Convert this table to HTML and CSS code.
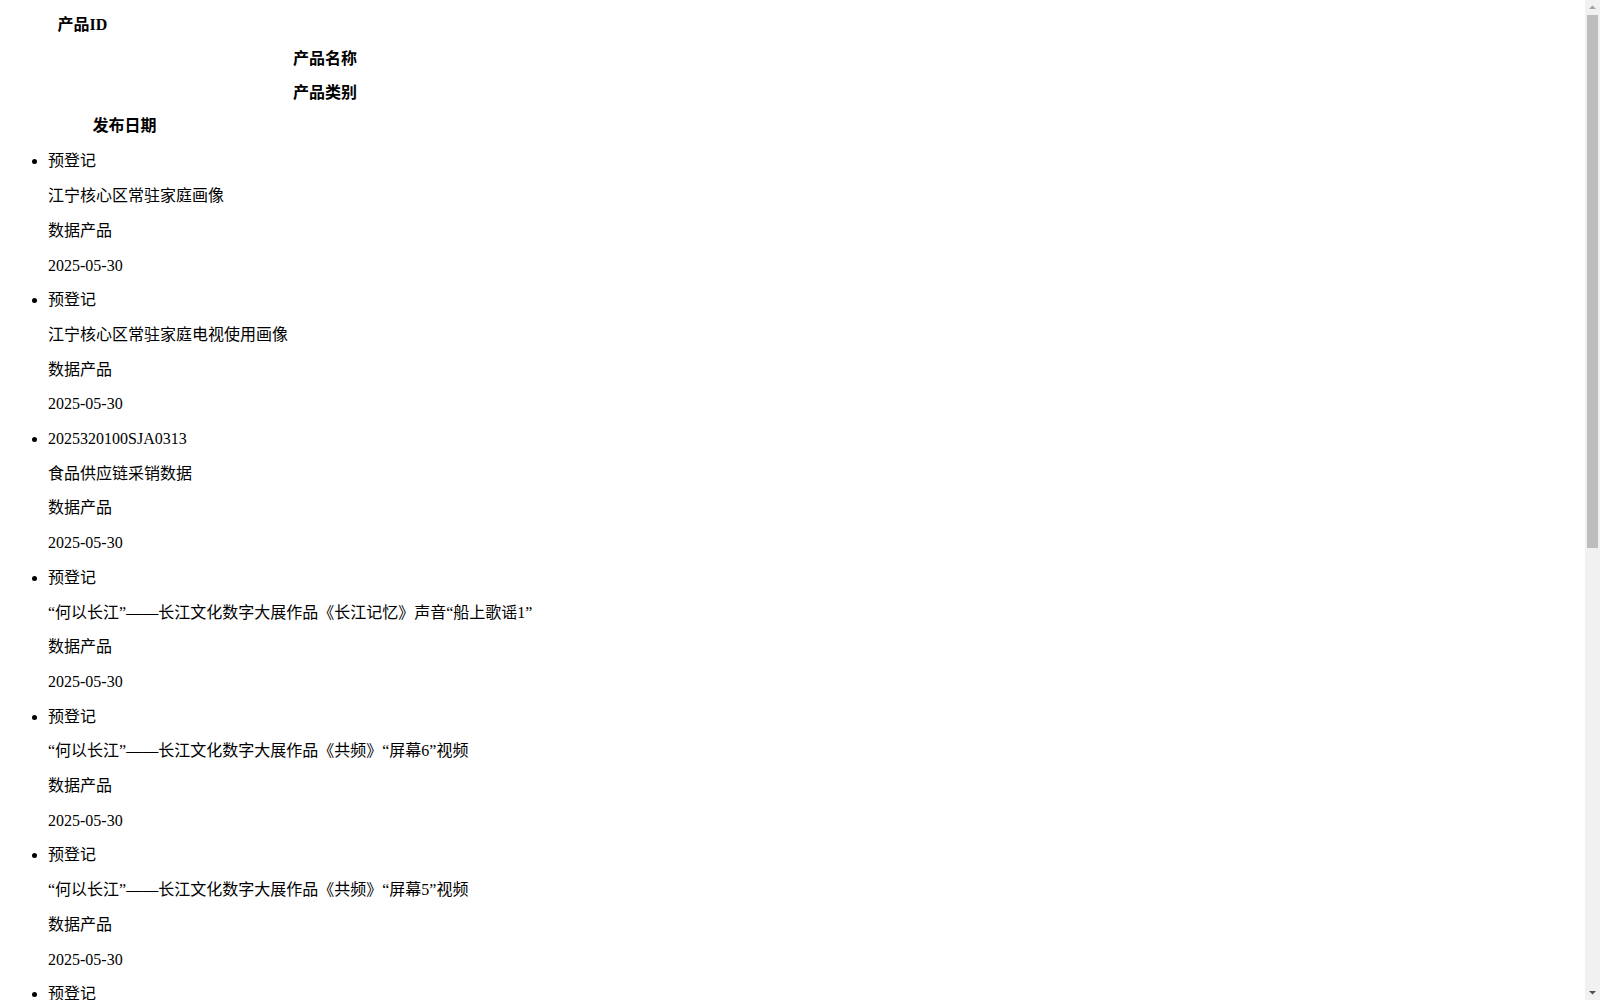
FILE: index.html
```html
<!DOCTYPE html>
<html lang="zh-CN">
<head>
<meta charset="utf-8">
<title>数据产品</title>
<link rel="stylesheet" href="styles.css">
</head>
<body>
<div class="head">
  <div class="th th-id">产品ID</div>
  <div class="th th-name">产品名称</div>
  <div class="th th-name">产品类别</div>
  <div class="th th-date">发布日期</div>
</div>
<ul class="list">
  <li><p>预登记</p><p>江宁核心区常驻家庭画像</p><p>数据产品</p><p>2025-05-30</p></li>
  <li><p>预登记</p><p>江宁核心区常驻家庭电视使用画像</p><p>数据产品</p><p>2025-05-30</p></li>
  <li><p>2025320100SJA0313</p><p>食品供应链采销数据</p><p>数据产品</p><p>2025-05-30</p></li>
  <li><p>预登记</p><p>“何以长江”——长江文化数字大展作品《长江记忆》声音“船上歌谣1”</p><p>数据产品</p><p>2025-05-30</p></li>
  <li><p>预登记</p><p>“何以长江”——长江文化数字大展作品《共频》“屏幕6”视频</p><p>数据产品</p><p>2025-05-30</p></li>
  <li><p>预登记</p><p>“何以长江”——长江文化数字大展作品《共频》“屏幕5”视频</p><p>数据产品</p><p>2025-05-30</p></li>
  <li><p>预登记</p><p>“何以长江”——长江文化数字大展作品《共频》“屏幕4”视频</p><p>数据产品</p><p>2025-05-30</p></li>
  <li><p>预登记</p><p>“何以长江”——长江文化数字大展作品《共频》“屏幕3”视频</p><p>数据产品</p><p>2025-05-30</p></li>
  <li><p>预登记</p><p>“何以长江”——长江文化数字大展作品《共频》“屏幕2”视频</p><p>数据产品</p><p>2025-05-30</p></li>
  <li><p>预登记</p><p>“何以长江”——长江文化数字大展作品《共频》“屏幕1”视频</p><p>数据产品</p><p>2025-05-30</p></li>
  <li><p>2025320100SJA0312</p><p>城市交通出行特征数据</p><p>数据产品</p><p>2025-05-29</p></li>
  <li><p>2025320100SJA0311</p><p>企业用电行为分析数据</p><p>数据产品</p><p>2025-05-29</p></li>
</ul>
<div class="scrollbar" aria-hidden="true">
  <svg class="sb-arrow sb-up" width="15" height="15" viewBox="0 0 15 15"><path d="M4 9 L7.5 5.5 L11 9 Z" fill="#a3a3a3"/></svg>
  <div class="sb-thumb"></div>
  <svg class="sb-arrow sb-down" width="15" height="15" viewBox="0 0 15 15"><path d="M4 6 L11 6 L7.5 9.5 Z" fill="#505050"/></svg>
</div>
</body>
</html>
```

FILE: styles.css
```css
html {
  background: #fff;
}
body {
  margin: 0 8px 8px;
  font-family: "Liberation Serif", "Noto Sans CJK SC", serif;
  font-size: 16px;
  color: #000;
}
.head {
  padding-top: 0.1px;
}
.th {
  font-weight: bold;
  text-align: center;
  line-height: 17.7px;
  margin: 16px 0;
}
.th-id { width: 149px; }
.th-name { width: 634px; }
.th-date { width: 233px; margin-bottom: 17.5px; }
.list {
  margin: 16px 0;
  padding-left: 40px;
}
.list p {
  margin: 16px 0;
  line-height: 18.7px;
}
.scrollbar {
  position: fixed;
  top: 0;
  right: 0;
  width: 15px;
  height: 100vh;
  background: #f1f1f1;
}
.sb-arrow {
  position: absolute;
  left: 0;
  display: block;
}
.sb-up { top: 0; }
.sb-down { bottom: 0; }
.sb-thumb {
  position: absolute;
  top: 15px;
  left: 2px;
  width: 11px;
  height: 533px;
  background: #bdbdbd;
}
```
